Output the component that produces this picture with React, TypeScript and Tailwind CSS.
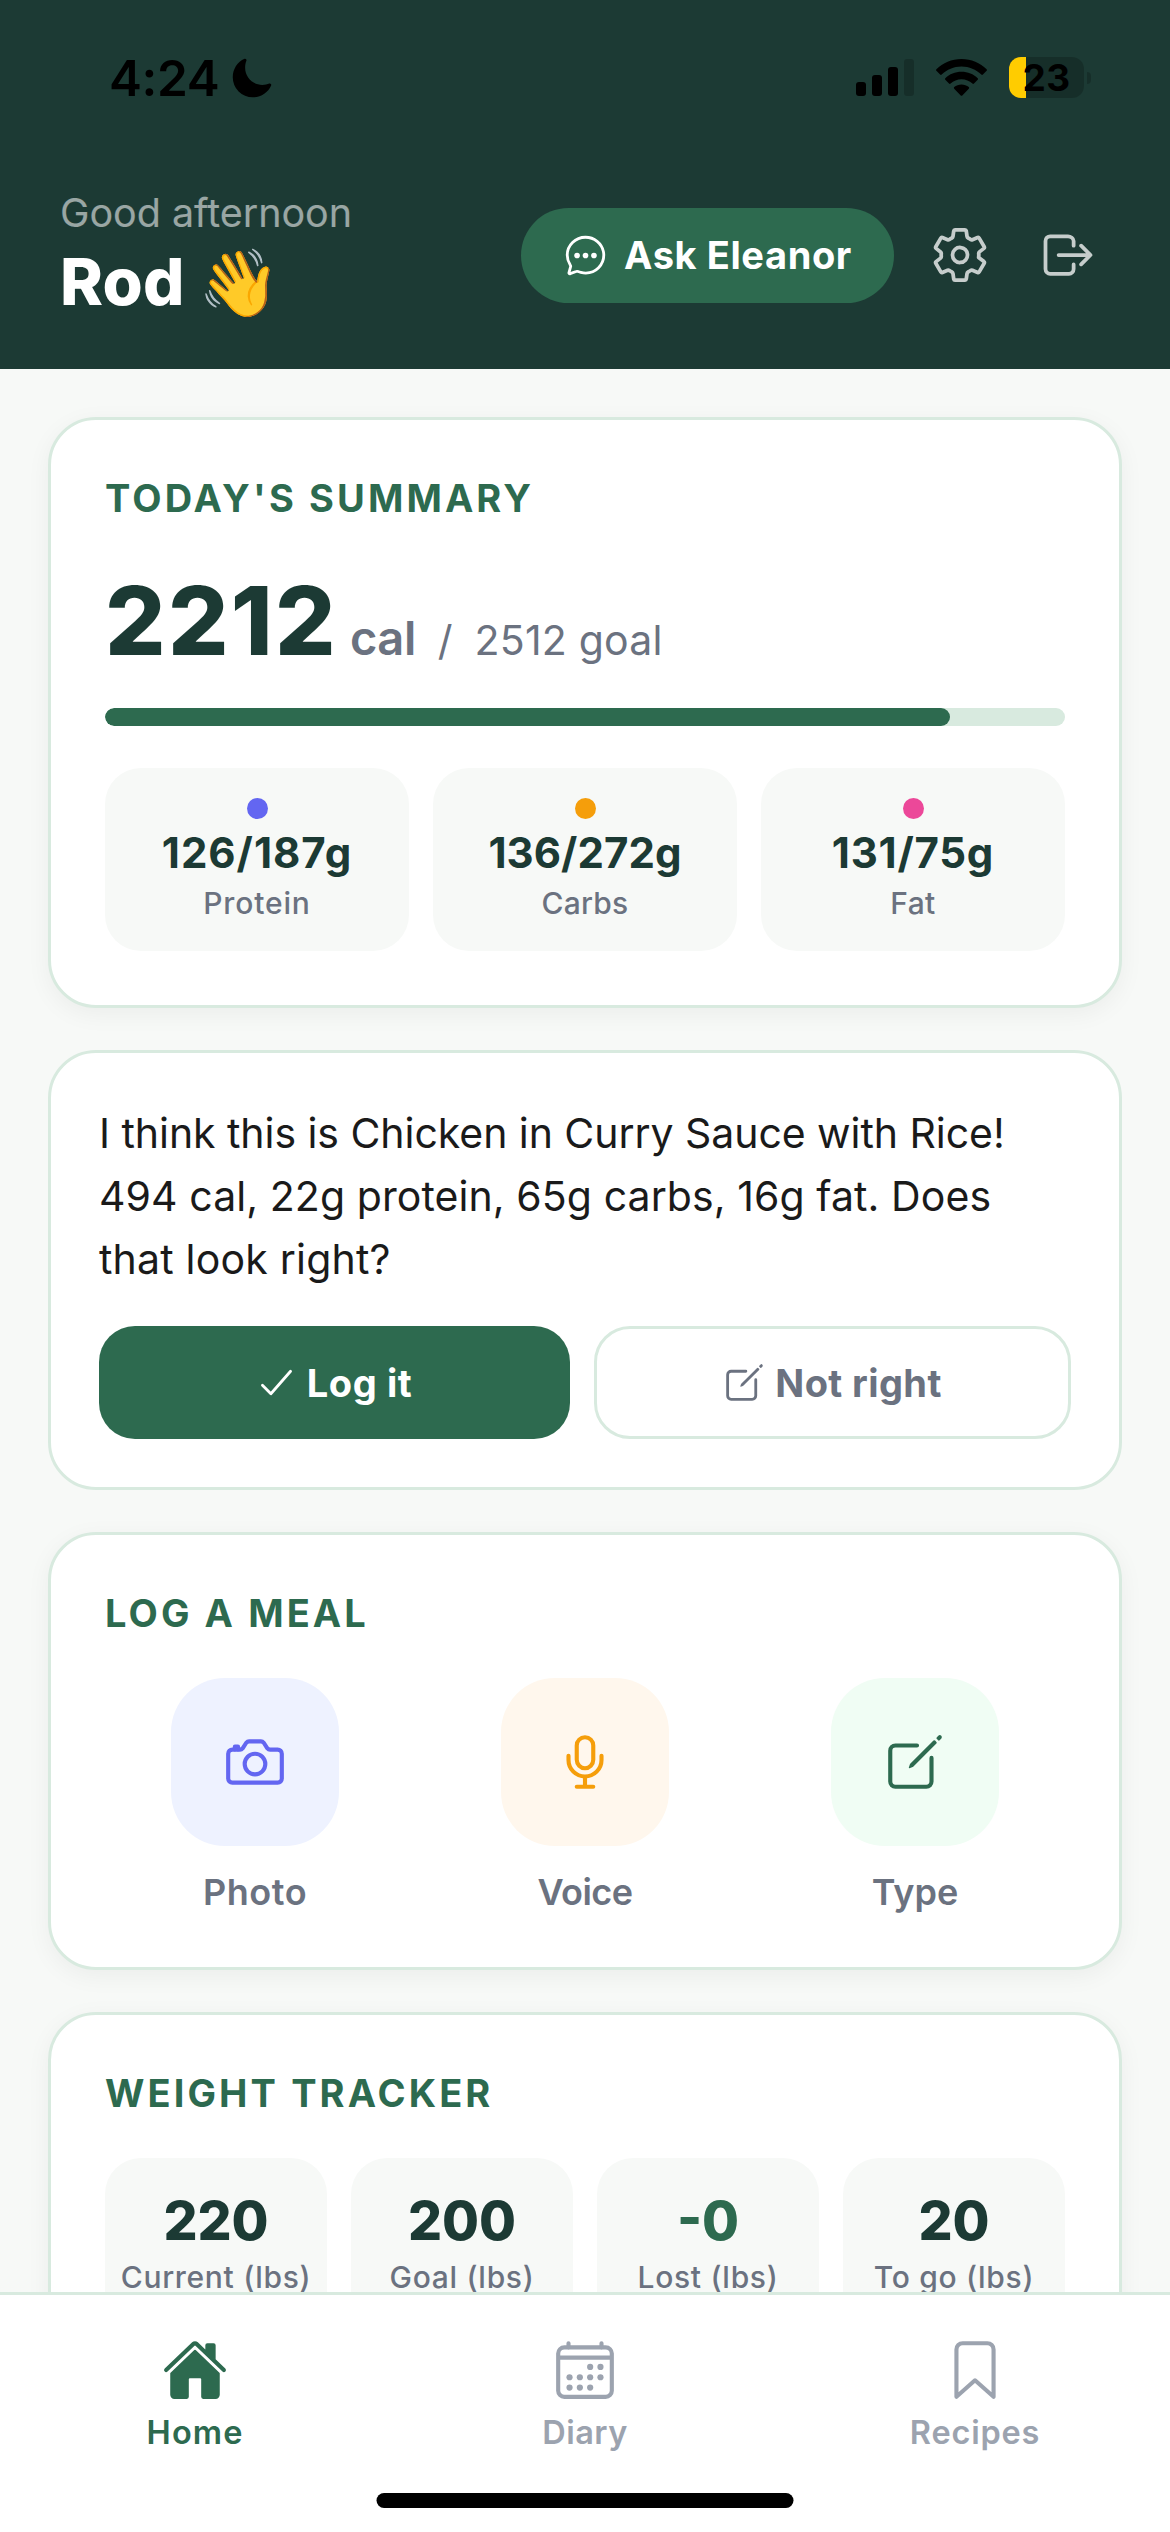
import type { ReactNode } from "react";
import type { IconType } from "react-icons";
import {
  IoBookmarkOutline,
  IoCalendarOutline,
  IoCameraOutline,
  IoChatbubbleEllipsesOutline,
  IoCheckmark,
  IoCreateOutline,
  IoHome,
  IoLogOutOutline,
  IoMicOutline,
  IoMoon,
  IoSettingsOutline,
} from "react-icons/io5";

const macros = [
  { label: "Protein", value: "126/187g", dot: "bg-[#6366f1]", valueTracking: "tracking-[1px]", labelTracking: "tracking-[0.85px]" },
  { label: "Carbs", value: "136/272g", dot: "bg-[#f59e0b]", valueTracking: "tracking-[0.05px]", labelTracking: "tracking-[0.2px]" },
  { label: "Fat", value: "131/75g", dot: "bg-[#ec4899]", valueTracking: "tracking-[0.75px]", labelTracking: "tracking-[0.4px]" },
];

const mealActions: { label: string; Icon: IconType; tile: string; tracking: string }[] = [
  { label: "Photo", Icon: IoCameraOutline, tile: "bg-[#eef2ff] text-[#6366f1]", tracking: "tracking-[0.55px]" },
  { label: "Voice", Icon: IoMicOutline, tile: "bg-[#fff7ed] text-[#f59e0b]", tracking: "tracking-[-0.5px]" },
  { label: "Type", Icon: IoCreateOutline, tile: "bg-[#f0fdf4] text-[#2d6a4f]", tracking: "tracking-normal" },
];

const weights = [
  { label: "Current (lbs)", value: "220", color: "text-[#1c3a34]" },
  { label: "Goal (lbs)", value: "200", color: "text-[#1c3a34]" },
  { label: "Lost (lbs)", value: "-0", color: "text-[#2d6a4f]" },
  { label: "To go (lbs)", value: "20", color: "text-[#1c3a34]" },
];

const tabs: { label: string; Icon: IconType; color: string; tracking: string }[] = [
  { label: "Home", Icon: IoHome, color: "text-[#2d6a4f]", tracking: "tracking-[1.1px]" },
  { label: "Diary", Icon: IoCalendarOutline, color: "text-[#9ca3af]", tracking: "tracking-[0.5px]" },
  { label: "Recipes", Icon: IoBookmarkOutline, color: "text-[#9ca3af]", tracking: "tracking-[0.8px]" },
];

function StatusBar() {
  return (
    <div className="flex h-[141px] items-start justify-between pr-[79px] pl-[109px] text-black">
      <div className="flex pt-[48px]">
        <span className="text-[49.5px] leading-[60px] font-semibold tracking-[-0.35px]">4:24</span>
        <IoMoon className="mt-[8px] ml-[11px] size-[44px]" />
      </div>
      <div className="flex pt-[57px]">
        <svg className="mt-[2px] h-[37px] w-[58px]" viewBox="0 0 58 37">
          <rect x="0" y="23" width="10" height="14" rx="3" />
          <rect x="16" y="16" width="10" height="21" rx="3" />
          <rect x="32" y="8" width="10" height="29" rx="3" />
          <rect x="48" y="0" width="10" height="37" rx="3" opacity="0.2" />
        </svg>
        <svg className="mt-[2px] ml-[22px] h-[37px] w-[51px]" viewBox="0 0 51 37">
          <path d="M25.5 0C35.3 0 44.2 3.9 50.6 10.2C51.1 10.7 51.1 11.3 50.6 11.8L46.9 15.5C46.4 16 45.8 16 45.3 15.5C40.1 10.5 33.2 7.4 25.5 7.4S10.9 10.5 5.7 15.5C5.2 16 4.6 16 4.1 15.5L0.4 11.8C-0.1 11.3-0.1 10.7 0.4 10.2C6.8 3.9 15.7 0 25.5 0Z" />
          <path d="M25.5 12.8C31.8 12.8 37.5 15.2 41.7 19.2C42.2 19.7 42.2 20.3 41.7 20.8L38 24.5C37.5 25 36.9 25 36.4 24.5C33.5 21.9 29.7 20.3 25.5 20.3S17.5 21.9 14.6 24.5C14.1 25 13.5 25 13 24.5L9.3 20.8C8.8 20.3 8.8 19.7 9.3 19.2C13.5 15.2 19.2 12.8 25.5 12.8Z" />
          <path d="M25.5 25.4C28.2 25.4 30.8 26.4 32.8 28.1C33.3 28.6 33.3 29.2 32.8 29.7L26.3 36.4C25.8 36.9 25.2 36.9 24.7 36.4L18.2 29.7C17.7 29.2 17.7 28.6 18.2 28.1C20.2 26.4 22.8 25.4 25.5 25.4Z" />
        </svg>
        <div className="relative ml-[22px] flex h-[41px] w-[75px] items-center justify-center rounded-[12px] bg-black/20">
          <div className="absolute inset-y-0 left-0 w-[17px] rounded-l-[12px] bg-[#ffcc00]" />
          <span className="relative text-[37px] leading-[41px] font-bold tracking-[0.5px]">23</span>
        </div>
        <div className="mt-[15px] ml-[3px] h-[12px] w-[4px] rounded-r-full bg-black/20" />
      </div>
    </div>
  );
}

function Header() {
  return (
    <header className="h-[369px] shrink-0 bg-[#1c3a34]">
      <StatusBar />
      <div className="flex h-[228px] items-center justify-between px-[60px]">
        <div>
          <div className="text-[39.5px] leading-[48px] tracking-[-0.05px] text-white/55">Good afternoon</div>
          <div className="mt-[6px] flex items-center text-[65px] leading-[78px] font-extrabold tracking-[0.2px] text-white">
            Rod
            <span className="ml-[13px] text-[66px] leading-[78px] tracking-normal">👋</span>
          </div>
        </div>
        <div className="flex items-center gap-[24px] text-white/75">
          <button className="flex h-[95px] w-[373px] items-center justify-center gap-[16px] rounded-full bg-[#2d6a4f] text-white">
            <IoChatbubbleEllipsesOutline className="size-[45px]" />
            <span className="text-[38px] leading-[48px] font-[650] tracking-[0.6px]">Ask Eleanor</span>
          </button>
          <button className="p-[12px]">
            <IoSettingsOutline className="size-[60px]" />
          </button>
          <button className="p-[12px]">
            <IoLogOutOutline className="size-[60px]" />
          </button>
        </div>
      </div>
    </header>
  );
}

function Card({ title, children, className }: { title: string; children: ReactNode; className: string }) {
  return (
    <section
      className={`shrink-0 rounded-[48px] border-3 border-[#d8eadf] bg-white p-[54px] shadow-[0_6px_24px_rgba(0,0,0,0.05)] ${className}`}
    >
      <h2 className="text-[38px] leading-[49px] font-[660] tracking-[3.1px] text-[#2d6a4f]">{title}</h2>
      {children}
    </section>
  );
}

function Summary() {
  return (
    <Card title="TODAY'S SUMMARY" className="h-[591px]">
      <div className="mt-[40px] flex h-[116px] items-baseline text-[#6b7280]">
        <span className="text-[95px] leading-[116px] font-[850] tracking-[2.3px] text-[#1c3a34]">2212</span>
        <span className="ml-[12px] text-[47px] leading-[58px] font-semibold tracking-[-0.4px]">cal</span>
        <span className="ml-[22px] text-[41px] leading-[50px]">/</span>
        <span className="ml-[22px] text-[41px] leading-[50px] tracking-[0.2px]">2512 goal</span>
      </div>
      <div className="mt-[29px] h-[18px] overflow-hidden rounded-full bg-[#d8eadf]">
        <div className="h-full rounded-full bg-[#2d6a4f]" style={{ width: `${(2212 / 2512) * 100}%` }} />
      </div>
      <div className="mt-[42px] grid grid-cols-3 gap-[24px]">
        {macros.map((m) => (
          <div key={m.label} className="flex h-[183px] flex-col items-center rounded-[36px] bg-[#f7f9f7] pt-[30px]">
            <div className={`size-[21px] rounded-full ${m.dot}`} />
            <div className={`mt-[9px] text-[42px] leading-[50px] font-bold text-[#1c3a34] ${m.valueTracking}`}>{m.value}</div>
            <div className={`mt-[7px] text-[30px] leading-[36px] font-medium text-[#6b7280] ${m.labelTracking}`}>{m.label}</div>
          </div>
        ))}
      </div>
    </Card>
  );
}

function MealGuess() {
  return (
    <section className="mt-[42px] h-[440px] shrink-0 rounded-[48px] border-3 border-[#d8eadf] bg-white px-[48px] pt-[49px]">
      <p className="text-[41px] leading-[63px] whitespace-nowrap text-[#1a1a1a]">
        <span className="tracking-[-0.05px]">I think this is Chicken in Curry Sauce with Rice!</span>
        <br />
        <span className="tracking-[0.08px]">494 cal, 22g protein, 65g carbs, 16g fat. Does</span>
        <br />
        <span className="tracking-[0.2px]">that look right?</span>
      </p>
      <div className="mt-[35px] flex gap-[24px] text-[38px] leading-[48px] font-[650]">
        <button className="flex h-[113px] w-[471px] items-center justify-center gap-[8px] rounded-[36px] bg-[#2d6a4f] pr-[3px] tracking-[0.6px] text-white">
          <IoCheckmark className="size-[45px]" />
          Log it
        </button>
        <button className="flex h-[113px] w-[477px] items-center justify-center gap-[8px] rounded-[36px] border-3 border-[#d8eadf] pr-[1px] tracking-[0.4px] text-[#6b7280]">
          <IoCreateOutline className="size-[45px]" />
          Not right
        </button>
      </div>
    </section>
  );
}

function LogMeal() {
  return (
    <Card title="LOG A MEAL" className="mt-[42px] h-[438px]">
      <div className="mt-[40px] grid grid-cols-3 gap-[30px]">
        {mealActions.map(({ label, Icon, tile, tracking }) => (
          <button key={label} className="flex flex-col items-center">
            <span className={`flex size-[168px] items-center justify-center rounded-[54px] ${tile}`}>
              <Icon className="size-[66px]" />
            </span>
            <span className={`mt-[24px] text-[36px] leading-[44px] font-semibold text-[#6b7280] ${tracking}`}>{label}</span>
          </button>
        ))}
      </div>
    </Card>
  );
}

function WeightTracker() {
  return (
    <Card title="WEIGHT TRACKER" className="mt-[42px] h-[420px]">
      <div className="mt-[40px] grid grid-cols-4 gap-[24px]">
        {weights.map((w) => (
          <div key={w.label} className="flex h-[180px] flex-col items-center rounded-[36px] bg-[#f7f9f7] pt-[31px]">
            <div className={`text-[53.5px] leading-[64px] font-extrabold ${w.color}`}>{w.value}</div>
            <div className="mt-[6px] text-[30px] leading-[36px] font-medium tracking-[0.7px] whitespace-nowrap text-[#6b7280]">
              {w.label}
            </div>
          </div>
        ))}
      </div>
    </Card>
  );
}

function TabBar() {
  return (
    <nav className="relative h-[240px] shrink-0 border-t-3 border-[#d8eadf] bg-white">
      <div className="grid grid-cols-3 pt-[42px]">
        {tabs.map(({ label, Icon, color, tracking }) => (
          <button key={label} className={`flex flex-col items-center ${color}`}>
            <Icon className="size-[66px]" />
            <span className={`mt-[10px] text-[32.5px] leading-[39px] font-semibold ${tracking}`}>{label}</span>
          </button>
        ))}
      </div>
      <div className="absolute bottom-[24px] left-1/2 h-[15px] w-[417px] -translate-x-1/2 rounded-full bg-black" />
    </nav>
  );
}

export default function App() {
  return (
    <div className="flex h-[2532px] w-[1170px] flex-col overflow-hidden bg-[#f7f9f7] font-['Inter',sans-serif]">
      <Header />
      <main className="flex min-h-0 flex-1 flex-col overflow-hidden px-[48px] pt-[48px]">
        <Summary />
        <MealGuess />
        <LogMeal />
        <WeightTracker />
      </main>
      <TabBar />
    </div>
  );
}
